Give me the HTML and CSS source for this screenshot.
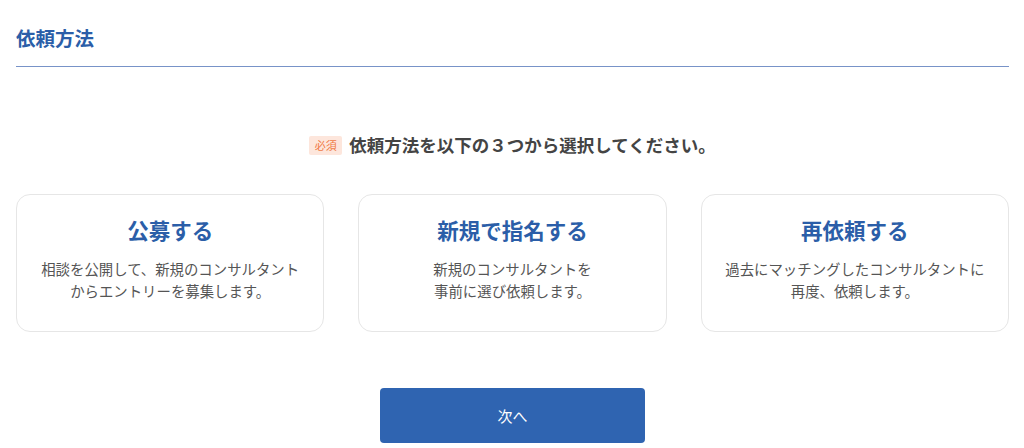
FILE: index.html
```html
<!DOCTYPE html>
<html lang="ja">
<head>
<meta charset="utf-8">
<link rel="stylesheet" href="styles.css">
</head>
<body>
<div class="page">
  <h2 class="section-title">依頼方法</h2>
  <div class="question">
    <span class="badge">必須</span>
    <span class="question-text">依頼方法を以下の３つから選択してください。</span>
  </div>
  <div class="cards">
    <div class="card">
      <div class="card-title">公募する</div>
      <p class="card-desc">相談を公開して、新規のコンサルタント<br>からエントリーを募集します。</p>
    </div>
    <div class="card">
      <div class="card-title">新規で指名する</div>
      <p class="card-desc">新規のコンサルタントを<br>事前に選び依頼します。</p>
    </div>
    <div class="card">
      <div class="card-title">再依頼する</div>
      <p class="card-desc">過去にマッチングしたコンサルタントに<br>再度、依頼します。</p>
    </div>
  </div>
  <div class="actions">
    <button class="next-btn">次へ</button>
  </div>
</div>
</body>
</html>
```

FILE: styles.css
```css
* { box-sizing: border-box; }
html, body { margin: 0; padding: 0; background: #fff; }
body {
  font-family: "Noto Sans CJK JP", "Noto Sans", sans-serif;
  color: #444;
}
.page {
  padding: 0 15px 0 16px;
}
.section-title {
  margin: 0;
  padding: 26px 0 16px;
  font-size: 19.5px;
  line-height: 24px;
  font-weight: 700;
  color: #2b5ea8;
  border-bottom: 1px solid #7893c8;
}
.question {
  display: flex;
  justify-content: center;
  align-items: center;
  gap: 7px;
  margin-top: 67px;
  height: 22px;
}
.badge {
  display: inline-block;
  background: #fde6dc;
  color: #f07a45;
  font-size: 11px;
  line-height: 19px;
  padding: 0 5px;
  border-radius: 2px;
  width: 33px;
  text-align: center;
}
.question-text {
  font-size: 17.5px;
  font-weight: 700;
  color: #444;
  line-height: 22px;
}
.cards {
  display: grid;
  grid-template-columns: repeat(3, 1fr);
  gap: 34px;
  margin-top: 38px;
}
.card {
  border: 1px solid #e6e6e6;
  border-radius: 14px;
  height: 138px;
  text-align: center;
  padding-top: 20px;
}
.card-title {
  font-size: 21.5px;
  font-weight: 700;
  color: #2b5ea8;
  line-height: 30px;
}
.card-desc {
  margin: 13px 0 0;
  font-size: 14.4px;
  line-height: 22px;
  color: #555;
}
.actions {
  display: flex;
  justify-content: center;
  margin-top: 56px;
}
.next-btn {
  width: 265px;
  height: 55px;
  background: #2f64b1;
  color: #fff;
  border: none;
  border-radius: 4px;
  font-family: inherit;
  font-size: 15px;
}
```
